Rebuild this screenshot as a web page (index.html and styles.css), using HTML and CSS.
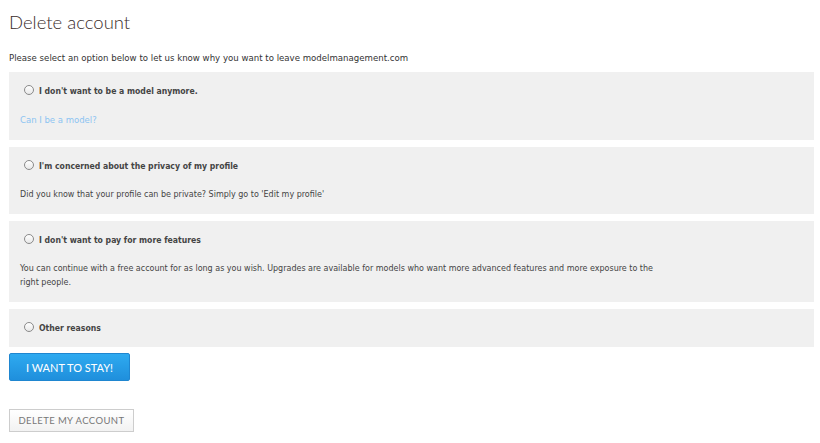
FILE: index.html
```html
<!DOCTYPE html>
<html>
<head>
<meta charset="utf-8">
<link rel="stylesheet" href="styles.css">
</head>
<body>
<div class="page">
  <h1 class="title">Delete account</h1>
  <p class="intro">Please select an option below to let us know why you want to leave modelmanagement.com</p>
  <div class="options">
    <div class="option">
      <label class="choice"><input type="radio" name="reason"><span>I don't want to be a model anymore.</span></label>
      <p class="desc"><a href="#" class="link">Can I be a model?</a></p>
    </div>
    <div class="option">
      <label class="choice"><input type="radio" name="reason"><span>I'm concerned about the privacy of my profile</span></label>
      <p class="desc">Did you know that your profile can be private? Simply go to 'Edit my profile'</p>
    </div>
    <div class="option">
      <label class="choice"><input type="radio" name="reason"><span>I don't want to pay for more features</span></label>
      <p class="desc">You can continue with a free account for as long as you wish. Upgrades are available for models who want more advanced features and more exposure to the right people.</p>
    </div>
    <div class="option">
      <label class="choice"><input type="radio" name="reason"><span>Other reasons</span></label>
    </div>
  </div>
  <div class="actions">
    <button class="btn-stay">I WANT TO STAY!</button>
    <button class="btn-delete">DELETE MY ACCOUNT</button>
  </div>
</div>
</body>
</html>
```
FILE: styles.css
```css
html, body {
  margin: 0;
  padding: 0;
  background: #fff;
}
.page {
  padding: 9px 6px 0 9px;
  font-family: "DejaVu Sans", sans-serif;
  color: #444;
}
.title {
  margin: 0;
  font-family: Lato, sans-serif;
  font-weight: 300;
  font-size: 18.5px;
  line-height: 26px;
  color: #3a2c2a;
}
.intro {
  margin: 17px 0 0;
  font-size: 8.6px;
  line-height: 12px;
  color: #333;
}
.options {
  margin-top: 8px;
  display: flex;
  flex-direction: column;
  gap: 7px;
}
.option {
  background: #f0f0f0;
  padding: 12px 11px 12px 11px;
}
.choice {
  display: flex;
  align-items: center;
  height: 14px;
  font-family: "DejaVu Sans Condensed", "DejaVu Sans", sans-serif;
  font-size: 8.6px;
  font-weight: bold;
  color: #444;
}
.choice input {
  appearance: none;
  -webkit-appearance: none;
  width: 10px;
  height: 10px;
  margin: -2px 5px 0 4px;
  border: 1px solid #8a8a8a;
  border-radius: 50%;
  background: linear-gradient(#fff, #e8e8e8);
  box-sizing: border-box;
}
.desc {
  margin: 15px 0 0;
  max-width: 640px;
  font-size: 8px;
  line-height: 14px;
  color: #444;
}
.link {
  color: #8cc4f2;
  text-decoration: none;
  font-size: 8.5px;
}
.actions {
  display: flex;
  flex-direction: column;
  align-items: flex-start;
  gap: 28px;
  margin-top: 6px;
}
.btn-stay {
  width: 121px;
  height: 28px;
  border: 1px solid #1f86d0;
  border-radius: 2px;
  background: linear-gradient(#2eaaf0, #1f8fdc);
  color: #fff;
  font-family: Lato, sans-serif;
  font-weight: 400;
  font-size: 11px;
  padding: 0;
}
.btn-delete {
  width: 125px;
  height: 23px;
  border: 1px solid #cdcdcd;
  border-radius: 0;
  background: linear-gradient(#fff, #f2f2f2);
  color: #777;
  font-family: Lato, sans-serif;
  font-weight: 400;
  font-size: 9.5px;
  letter-spacing: 0.4px;
  padding: 0;
}
```
